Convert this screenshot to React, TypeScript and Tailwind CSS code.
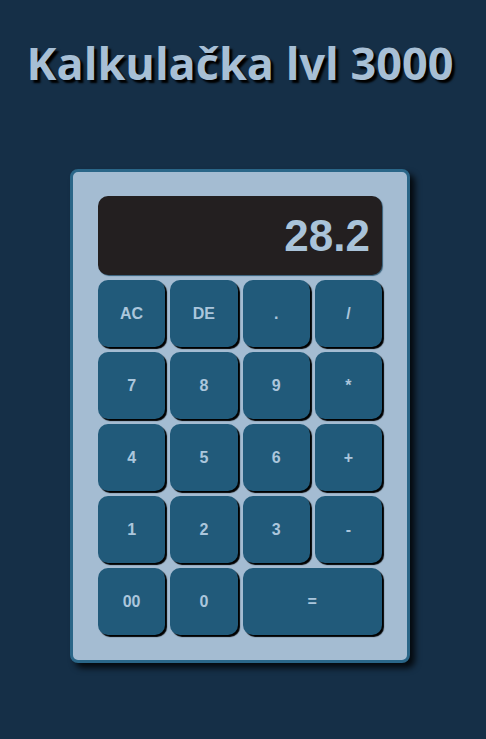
export default function App() {
  const keys: { label: string; wide?: boolean }[] = [
    { label: 'AC' }, { label: 'DE' }, { label: '.' }, { label: '/' },
    { label: '7' }, { label: '8' }, { label: '9' }, { label: '*' },
    { label: '4' }, { label: '5' }, { label: '6' }, { label: '+' },
    { label: '1' }, { label: '2' }, { label: '3' }, { label: '-' },
    { label: '00' }, { label: '0' }, { label: '=', wide: true },
  ];

  return (
    <div className="min-h-[739px] w-full bg-[#152f47] pt-[34px] pb-[76px]">
      <h1
        className="pr-[6px] text-center text-[45px] font-bold leading-[58px] text-[#a7bfd5] [text-shadow:3px_3px_2px_#000]"
        style={{ fontFamily: '"Open Sans", "Noto Sans", sans-serif' }}
      >
        Kalkulačka lvl 3000
      </h1>

      <div className="ml-[70px] mt-[77px] w-[340px] rounded-[8px] border-[3px] border-[#2a6688] bg-[#a4bcd2] px-[25px] pt-[24px] pb-[25px] shadow-[5px_5px_6px_rgba(0,0,0,0.8)]">
        <div
          className="flex h-[79px] items-center justify-end rounded-[10px] bg-[#231f20] px-[12px] text-[44px] font-bold text-[#a9c3d9] shadow-[1px_1px_1px_#355d77]"
          style={{ fontFamily: '"Liberation Sans", Arial, sans-serif' }}
        >
          28.2
        </div>

        <div className="mt-[5px] grid grid-cols-4 gap-[5px]">
          {keys.map((k) => (
            <button
              key={k.label}
              className={`${k.wide ? 'col-span-2' : ''} h-[67px] rounded-[10px] bg-[#215a7a] text-[16px] font-bold text-[#abc6dc] shadow-[2px_2px_1px_#000]`}
              style={{ fontFamily: '"Liberation Sans", Arial, sans-serif' }}
            >
              {k.label}
            </button>
          ))}
        </div>
      </div>
    </div>
  );
}
